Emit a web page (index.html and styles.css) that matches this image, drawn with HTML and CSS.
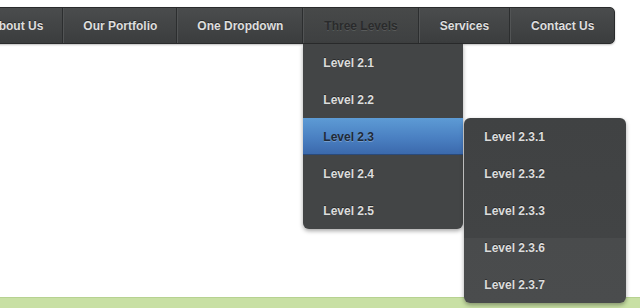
FILE: index.html
```html
<!DOCTYPE html>
<html lang="en">
<head>
  <meta charset="UTF-8">
  <meta name="viewport" content="width=device-width, initial-scale=1.0">
  <title>Three Levels Menu</title>
  <link rel="stylesheet" href="styles.css">
</head>
<body>

  <!-- Main Menu -->
  <ul class="menu">
    <li><a href="#">About Us</a></li>
    <li><a href="#">Our Portfolio</a></li>
    <li><a href="#">One Dropdown</a></li>
    <li class="open wide">
      <a href="#" class="current">Three Levels</a>
      <ul class="dropdown">
        <li><a href="#">Level 2.1</a></li>
        <li><a href="#">Level 2.2</a></li>
        <li class="open">
          <a href="#" class="hover">Level 2.3</a>
          <ul class="dropdown sub">
            <li><a href="#">Level 2.3.1</a></li>
            <li><a href="#">Level 2.3.2</a></li>
            <li><a href="#">Level 2.3.3</a></li>
            <li><a href="#">Level 2.3.6</a></li>
            <li><a href="#">Level 2.3.7</a></li>
          </ul>
        </li>
        <li><a href="#">Level 2.4</a></li>
        <li><a href="#">Level 2.5</a></li>
      </ul>
    </li>
    <li class="wide"><a href="#">Services</a></li>
    <li class="wide"><a href="#">Contact Us</a></li>
  </ul>

  <!-- Page Content -->
  <div class="content"></div>

  <!-- Footer -->
  <div class="footer"></div>

</body>
</html>
```

FILE: styles.css
```css
/* General Styles */
body {
  font-family: 'Liberation Sans', Arial, sans-serif;
  margin: 0;
  padding: 0;
  background: #fff;
  overflow: hidden;
}

ul {
  list-style: none;
  margin: 0;
  padding: 0;
}

a {
  text-decoration: none;
}

/* Menu Bar */
.menu {
  display: flex;
  width: max-content;
  margin: 7px 0 0 -30px;
  background: linear-gradient(#4a4c4d, #3b3d3e);
  border: 1px solid #2a2b2c;
  border-radius: 0 5px 5px 0;
  box-shadow: 0 1px 2px rgba(0, 0, 0, 0.25);
  position: relative;
  z-index: 10;
}

.menu > li {
  position: relative;
  border-left: 1px solid #525455;
  border-right: 1px solid #2c2e2f;
}

.menu > li:first-child {
  border-left: none;
}

.menu > li:last-child {
  border-right: none;
}

.menu > li > a {
  display: block;
  height: 35px;
  line-height: 37px;
  padding: 0 19px;
  font-size: 12px;
  font-weight: bold;
  color: #dedede;
  text-shadow: 0 -1px 0 rgba(0, 0, 0, 0.45);
}

.menu > li.wide > a {
  padding: 0 20px;
}

.menu > li > a.current {
  color: #2a2b2c;
  text-shadow: 0 1px 0 rgba(255, 255, 255, 0.12);
  background: linear-gradient(#474949, #3e4041);
}

/* Dropdowns */
.dropdown {
  position: absolute;
  top: 36px;
  left: -1px;
  width: 160px;
  background: #434546;
  border-radius: 0 0 6px 6px;
  box-shadow: 0 2px 4px rgba(0, 0, 0, 0.35);
}

.dropdown li {
  position: relative;
}

.dropdown a {
  display: block;
  height: 37px;
  line-height: 39px;
  padding-left: 20px;
  font-size: 12px;
  font-weight: bold;
  color: #dcdcdc;
  text-shadow: 0 -1px 0 rgba(0, 0, 0, 0.4);
}

.dropdown li:last-child a {
  border-radius: 0 0 6px 6px;
}

.dropdown a.hover {
  height: 36px;
  line-height: 38px;
  border-bottom: 1px solid #2a4a7a;
  background: linear-gradient(#5d9bd5, #4a80c2 55%, #3b69ac);
  color: #1f2a38;
  text-shadow: 0 1px 0 rgba(255, 255, 255, 0.25);
}

.dropdown.sub {
  top: 0;
  left: 161px;
  width: 162px;
  border-radius: 6px;
  background: linear-gradient(#404243 0, #424445 120px, #494b4c 120px, #4a4c4d);
}

/* Page */
.content {
  height: 253px;
}

.footer {
  height: 11px;
  background: #c8e0a4;
  border-top: 1px solid #b7d291;
}
```
